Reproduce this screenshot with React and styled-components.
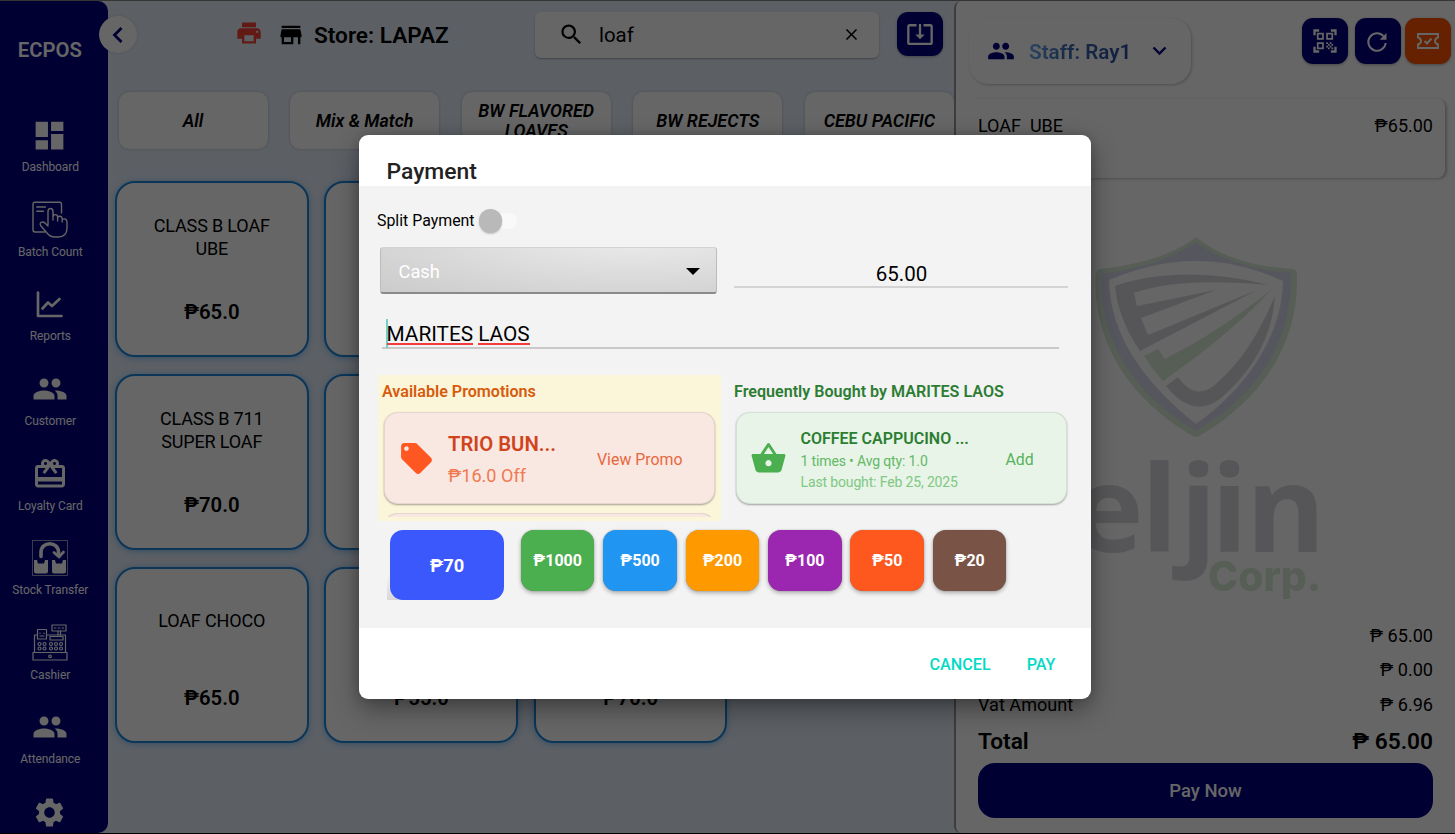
import React from "react";
import styled, { createGlobalStyle, css } from "styled-components";
import {
  MdDashboard, MdPeople, MdRedeem, MdSettings, MdPrint, MdStore, MdSearch,
  MdClose, MdSystemUpdateAlt, MdQrCodeScanner, MdLocalOffer, MdShoppingBasket,
} from "react-icons/md";

const GlobalStyle = createGlobalStyle`
  * { box-sizing: border-box; }
  html, body { margin: 0; padding: 0; overflow: hidden; background: #000; }
  body { font-family: Roboto, "Noto Sans", sans-serif; color: #000; }
  button { font-family: inherit; border: 0; padding: 0; }
  svg { display: block; flex: none; }
`;

const Screen = styled.div`
  position: relative;
  width: 1455px;
  height: 834px;
  padding: 1px 0;
  display: flex;
  overflow: hidden;
  background: linear-gradient(#848484 1px, #e6effc 1px, #e6effc 833px, #000 833px);
`;

/* ---------- sidebar ---------- */
const Sidebar = styled.nav`
  position: relative;
  flex: none;
  width: 107.5px;
  height: 832px;
  padding-right: 8px;
  background: #000080;
  border-radius: 0 10px 10px 0;
  color: #fff;
  display: flex;
  flex-direction: column;
  align-items: center;
`;
const Brand = styled.div`
  height: 30px;
  margin: 34px 0 44px;
  line-height: 30px;
  font-size: 20.3px;
  font-weight: 600;
`;
const NavItem = styled.div`
  flex: none;
  height: 84.65px;
  padding-top: 7px;
  display: flex;
  flex-direction: column;
  align-items: center;
`;
const NavIcon = styled.div`
  height: 38px;
  display: flex;
  align-items: center;
`;
const NavLabel = styled.div`
  margin-top: 5px;
  padding-left: 1px;
  font-size: 12px;
  line-height: 16px;
  letter-spacing: -0.1px;
  white-space: nowrap;
`;
const Collapse = styled.button`
  position: absolute;
  left: 99px;
  top: 15px;
  width: 38px;
  height: 37px;
  border-radius: 50%;
  background: #fff;
  box-shadow: 0 0 3px rgba(0, 0, 0, 0.15);
  display: flex;
  align-items: center;
  justify-content: center;
`;

/* ---------- catalogue ---------- */
const Main = styled.main`
  flex: none;
  width: 846.5px;
  height: 832px;
  overflow: hidden;
`;
const TopBar = styled.header`
  display: flex;
  padding: 11px 0 0 129.5px;
  height: 91px;
`;
const StoreTitle = styled.div`
  display: flex;
  align-items: center;
  width: 298px;
  height: 46px;
  font-size: 22.6px;
  font-weight: 600;
  white-space: nowrap;
`;
const PrinterIcon = styled(MdPrint)`
  margin: 0 14px 4px -2px;
  color: #f44336;
`;
const TitleText = styled.span`
  margin-left: 9px;
`;
const SearchBox = styled.div`
  display: flex;
  align-items: center;
  width: 343.5px;
  height: 46px;
  padding: 0 17.5px 1px 23px;
  border-radius: 6px;
  background: #fff;
  box-shadow: 0 1px 2px rgba(0, 0, 0, 0.3);
  font-size: 20.4px;
`;
const Query = styled.span`
  flex: 1;
  margin-left: 14px;
`;
const ToolButton = styled.button`
  width: 46px;
  height: ${(p) => p.$h || 46}px;
  margin-left: ${(p) => p.$gap || 0}px;
  border-radius: 11px;
  background: ${(p) => p.$bg || "#000080"};
  color: #fff;
  box-shadow: 0 1px 3px rgba(0, 0, 0, 0.3);
  display: flex;
  align-items: center;
  justify-content: center;
`;
const Tabs = styled.div`
  display: flex;
  gap: 22.6px;
  padding-left: 11px;
  height: 88px;
`;
const Tab = styled.div`
  flex: none;
  width: 149px;
  height: 57px;
  padding: ${(p) => (p.$tall ? "9px" : "19px")} 10px 0;
  border-radius: 10px;
  background: #fff;
  box-shadow: 0 0 3px rgba(0, 0, 0, 0.22);
  text-align: center;
  font-size: 17.9px;
  line-height: 20px;
  font-weight: 600;
  font-style: italic;
  overflow: hidden;
`;
const Products = styled.div`
  display: grid;
  grid-template-columns: repeat(3, 193.5px);
  grid-auto-rows: 176px;
  gap: 17px 15.8px;
  padding: 0.5px 0 0 7.5px;
`;
const Product = styled.div`
  border: 2px solid #1f87dc;
  border-radius: 20px;
  background: #fff;
  box-shadow: 0 1px 6px rgba(33, 150, 243, 0.5);
  text-align: center;
`;
const ProductName = styled.div`
  height: 110px;
  padding: ${(p) => (p.$lines > 1 ? 31 : 40)}px 20px 0;
  font-size: 18px;
  letter-spacing: -0.15px;
  line-height: 23px;
  white-space: pre-line;
`;
const ProductPrice = styled.div`
  font-size: 20.3px;
  line-height: 38px;
  font-weight: 600;
`;

/* ---------- order panel ---------- */
const Order = styled.aside`
  position: relative;
  flex: none;
  width: 501px;
  height: 832px;
  padding: 17px 4px 15px 13px;
  display: flex;
  flex-direction: column;
  border-left: 2px solid #9a9a9a;
  border-radius: 7px 0 0 7px;
  background: #fff;
`;
const OrderTop = styled.div`
  display: flex;
  height: 81px;
`;
const StaffCard = styled.div`
  width: 222px;
  height: 66px;
  margin-right: auto;
  padding: 0 24px 0 18px;
  display: flex;
  align-items: center;
  border-radius: 20px;
  background: #fff;
  box-shadow: 1px 1px 3px rgba(0, 0, 0, 0.24);
  color: #000080;
`;
const StaffName = styled.span`
  flex: 1;
  margin-left: 14px;
  padding-top: 2px;
  font-size: 20.7px;
  font-weight: 600;
  color: transparent;
  background: linear-gradient(100deg, #6cb0f5 0, #3c6cb4 40px, #2a4a9c 102px);
  background-clip: text;
  -webkit-background-clip: text;
`;
const OrderLine = styled.div`
  width: 479px;
  height: 79px;
  margin-left: -3px;
  padding: 14.5px 12px 0 12px;
  display: flex;
  justify-content: space-between;
  border-radius: 8px;
  background: #fff;
  box-shadow: 2px 1px 3px rgba(0, 0, 0, 0.26);
  font-size: 18px;
  line-height: 24px;
  white-space: pre;
`;
const Watermark = styled.svg`
  margin: 49px 0 0 96.5px;
`;
const Totals = styled.div`
  margin-top: auto;
  padding: 0 18px 0 9px;
`;
const Row = styled.div`
  display: flex;
  justify-content: space-between;
  height: 34.4px;
  line-height: 34.4px;
  font-size: 18.1px;
  ${(p) => p.$total && css`
    height: 40px;
    line-height: 40px;
    font-size: 22.7px;
    font-weight: 600;
  `}
`;
const PayNow = styled.button`
  width: 455px;
  height: 55px;
  margin-top: 1px;
  border-radius: 17px;
  background: #000080;
  color: #fff;
  font-size: 18.5px;
  font-weight: 500;
`;

/* ---------- dialog ---------- */
const Backdrop = styled.div`
  position: absolute;
  inset: 0;
  padding-right: 5px;
  display: flex;
  align-items: center;
  justify-content: center;
  background: rgba(0, 0, 0, 0.6);
`;
const Dialog = styled.section`
  width: 732px;
  height: 564.5px;
  border-radius: 9px;
  background: #fff;
  box-shadow: 0 10px 26px rgba(0, 0, 0, 0.38), 0 0 10px rgba(0, 0, 0, 0.15);
  overflow: hidden;
`;
const DialogTitle = styled.h2`
  height: 51.5px;
  margin: 0;
  padding: 22px 0 0 27.5px;
  font-size: 22.9px;
  line-height: 30px;
  font-weight: 500;
  color: #222;
`;
const DialogBody = styled.div`
  height: 442px;
  padding-top: 19.5px;
  background: #f3f3f3;
`;
const SplitRow = styled.div`
  display: flex;
  align-items: center;
  height: 30px;
  padding-left: 18px;
  font-size: 15.9px;
`;
const Switch = styled.span`
  display: flex;
  align-items: center;
  width: 26px;
  height: 16px;
  margin-left: 16px;
  border-radius: 8px;
  background: #f9f9f9;
`;
const Thumb = styled.span`
  flex: none;
  width: 23.5px;
  height: 23.5px;
  margin-left: -12px;
  border-radius: 50%;
  background: #b9b9b9;
  box-shadow: 0 1px 2px rgba(0, 0, 0, 0.2);
`;
const TenderRow = styled.div`
  display: flex;
  padding: 11.5px 0 0 21px;
`;
const Spinner = styled.div`
  display: flex;
  align-items: center;
  justify-content: space-between;
  width: 337px;
  height: 47px;
  padding: 2px 16.5px 0 17.5px;
  border-radius: 3px;
  border: 1px solid #bcbcbc;
  border-bottom: 2px solid #8a8a8a;
  border-top-color: #d2d2d2;
  background: radial-gradient(ellipse at 75% -20%, #ebebeb, #d8d8d8 60%, #cbcbcb 100%);
  color: #fff;
  font-size: 18.3px;
`;
const Amount = styled.div`
  width: 334px;
  height: 40.5px;
  margin-left: 17px;
  padding: 15px 0 0 1px;
  border-bottom: 2px solid #d3d3d3;
  text-align: center;
  font-size: 20.5px;
  line-height: 24px;
`;
const CustomerField = styled.div`
  display: flex;
  gap: 5px;
  width: 677px;
  height: 30px;
  margin: 24.5px 0 0 23px;
  padding-left: 4px;
  border-bottom: 2px solid #c9c9c9;
  font-size: 20.8px;
`;
const Caret = styled.span`
  width: 2px;
  height: 29px;
  margin-right: -6.5px;
  background: #74cfc8;
`;
const Misspelt = styled.span`
  height: 26.5px;
  border-bottom: 2px solid #f23c3c;
  line-height: 30.5px;
`;
const Panels = styled.div`
  display: flex;
  padding: 26px 0 0 19px;
`;
const Panel = styled.div`
  width: ${(p) => p.$w}px;
  height: 146.5px;
  margin-right: 9px;
  padding: 0 ${(p) => p.$side}px;
  overflow: hidden;
  background: ${(p) => p.$bg};
`;
const PanelTitle = styled.div`
  height: 37.5px;
  margin-left: -2px;
  font-size: 16.1px;
  line-height: 34px;
  font-weight: 600;
  color: ${(p) => p.$color};
  white-space: nowrap;
`;
const Offer = styled.div`
  display: flex;
  align-items: center;
  height: 92px;
  border-radius: 14px;
  border: 1px solid rgba(120, 130, 120, 0.16);
  background: ${(p) => p.$bg};
  box-shadow: 0 1px 2px rgba(0, 0, 0, 0.34);
  padding-left: ${(p) => p.$pad}px;
  color: ${(p) => p.$color};
`;
const Peek = styled.div`
  height: 4px;
  margin-top: 8.5px;
  overflow: hidden;
`;
const OfferText = styled.div`
  flex: none;
  width: ${(p) => p.$w}px;
  margin-left: ${(p) => p.$ml}px;
  padding-top: 4px;
  white-space: nowrap;
`;
const OfferLine = styled.div`
  font-size: ${(p) => p.$size}px;
  line-height: ${(p) => p.$lh}px;
  font-weight: ${(p) => p.$weight || 400};
  color: ${(p) => p.$color};
  letter-spacing: ${(p) => p.$ls || 0}px;
`;
const OfferAction = styled.span`
  padding-top: 1.5px;
  font-size: 15.9px;
  color: ${(p) => p.$color};
  white-space: nowrap;
`;
const CashRow = styled.div`
  display: flex;
  gap: 8.9px;
  padding: 8.5px 0 0 28px;
`;
const ExactWrap = styled.div`
  height: 70.5px;
  margin-right: 5px;
  padding: 0 3px;
  background: linear-gradient(90deg, transparent 100px, #f3f3f3 100px), linear-gradient(#f3f3f3 45px, #d6d6d6 71px);
`;
const Cash = styled.button`
  width: ${(p) => p.$w || 73.5}px;
  height: ${(p) => p.$h || 61}px;
  padding-top: 1px;
  border-radius: 13px;
  background: ${(p) => p.$bg};
  box-shadow: ${(p) => (p.$w ? "none" : "0 2px 4px rgba(0, 0, 0, 0.3), 0 0 1px rgba(0, 0, 0, 0.4)")};
  color: #fff;
  font-size: ${(p) => p.$size || 16}px;
  font-weight: 700;
`;
const Actions = styled.footer`
  display: flex;
  justify-content: flex-end;
  gap: 36px;
  padding: 26.5px 35.5px 0 0;
`;
const Action = styled.button`
  background: none;
  color: #03dac5;
  font-size: 16.2px;
  line-height: 20px;
  font-weight: 500;
`;

/* ---------- drawings ---------- */
const Stroke = (props) => (
  <svg fill="none" stroke="currentColor" strokeLinecap="round" strokeLinejoin="round" {...props} />
);
const BatchIcon = () => (
  <Stroke width="36" height="37" viewBox="0 0 36 37" strokeWidth="1.4">
    <path d="M29.5 12V3.2Q29.5 1.2 27.5 1.2H3Q1 1.2 1 3.2V28.5Q1 31 3 31H13M4.8 6H13.500M4.800 10.200H11.500" />
    <path d="M16 24V10.500Q16 7.500 18.500 7.500T21 10.500V19M21 16Q21 13.600 23.300 13.600T25.600 16V20M25.600 17Q26 15 28 15.200T30.200 18V21M30.200 19Q31 17.500 33 18T35 21V27Q35 36 26 36H23Q18 36 15 32L8.600 24.500Q7.500 22 9.500 21.200Q12 20.500 14 23L16 25" />
  </Stroke>
);
const ReportsIcon = () => (
  <Stroke width="27" height="27" viewBox="0 0 27 27" strokeWidth="2.7">
    <path d="M2 1.500V25H25.500" />
    <path d="M6.500 17.500L12 11.500L16 15L23.500 8" />
  </Stroke>
);
const TransferIcon = () => (
  <svg width="36" height="36" viewBox="0 0 36 36">
    <rect x=".5" y=".5" width="35" height="35" fill="none" stroke="#b8b8d0" strokeWidth=".8" />
    <path d="M9 16.500V12.500C9 .8 26.500 .8 26.500 12.500V15" fill="none" stroke="#fff" strokeWidth="3.600" strokeLinecap="round" />
    <path d="M22 12.500L27 17L31.500 12" fill="none" stroke="#fff" strokeWidth="2.800" strokeLinejoin="round" strokeLinecap="round" />
    <path d="M2 20H5L6 23.500H12L13 20H16V31.500Q16 33.500 14 33.500H4Q2 33.500 2 31.500ZM20 20H23L24 23.500H30L31 20H34V31.500Q34 33.500 32 33.500H22Q20 33.500 20 31.500Z" fill="#fff" />
  </svg>
);
const CashierIcon = () => (
  <Stroke width="36" height="37" viewBox="0 0 36 37" strokeWidth="1.200">
    <rect x="20" y="1" width="14" height="6" />
    <path d="M22.500 4H24M26.300 4H27.800M30 4H31.500M26 7V11M28.500 7V11" />
    <path d="M5.500 15V5.500H14.500V15ZM8 9V9.500M12 9V9.500M8 12H12" />
    <path d="M5.500 11H2.500V28M14.500 11H33.500V28M18 12.500H31V16H18Z" />
    <path d="M1 28.500H35V36H1Z" />
    {[7.5, 12.5, 19, 24, 29].map((x) => (
      <React.Fragment key={x}>
        <circle cx={x} cy="20" r="1.500" />
        <circle cx={x} cy="24.500" r="1.500" />
      </React.Fragment>
    ))}
    <circle cx="18" cy="32.300" r="1.300" />
  </Stroke>
);
const RefreshIcon = () => (
  <svg width="24" height="24" viewBox="0 0 24 24">
    <path d="M19.700 14A8.700 8.700 0 1 1 17.500 7.200" fill="none" stroke="currentColor" strokeWidth="2" />
    <path d="M20.500 4V10.800H13.700Z" fill="currentColor" />
  </svg>
);
const TicketIcon = () => (
  <Stroke width="24" height="18" viewBox="0 0 24 18" strokeWidth="1.900">
    <path d="M2 2H22V5.500Q19 6.500 19 9T22 12.500V16H2V12.500Q5 11.500 5 9T2 5.500Z" strokeLinejoin="miter" />
    <path d="M8.500 9L11 11.500L15.500 6.500" strokeLinecap="butt" strokeLinejoin="miter" />
  </Stroke>
);
const Logo = () => (
  <Watermark width="290" height="385" viewBox="1066 228 290 385">
    <g opacity="0.2">
      <path d="M1196 238C1218 256 1251 268 1293 270Q1297 271 1297 276C1299 346 1260 401 1201 436Q1196 440 1191 436C1132 401 1093 346 1095.500 277Q1096 271 1100 270C1145 265 1176 254 1196 238Z" fill="#3a9c36" />
      <path d="M1196 243C1218 260 1251 271 1291 274C1293 344 1256 397 1196 432C1136 397 1099 344 1101 275C1145 269 1176 258 1196 243Z" fill="#40409a" />
      <path d="M1196 262C1228 262 1257 270 1283 282C1282 336 1248 388 1196 425C1144 384 1110 336 1109 281C1135 270 1164 262 1196 262Z" fill="#fff" />
      <path d="M1115 287C1165 270 1220 274 1268 286C1222 282 1171 281 1134 294L1137 307L1216 291L1141 319L1148 336L1257 291L1140 352C1126 332 1117 309 1115 287Z" fill="#36405a" />
      <path d="M1144 357L1158 350L1165 360C1204 340 1239 317 1272 290C1238 327 1201 355 1163 382Q1152 370 1144 357Z" fill="#3a9c36" />
      <path d="M1166 387L1178 378C1190 395 1203 397 1217 384C1243 361 1259 334 1275 297C1272 342 1249 375 1221 399C1200 415 1182 407 1166 387Z" fill="#36405a" />
      <g fill="#36405a" fontFamily="'Open Sans', sans-serif" fontWeight="700" fontSize="121">
        <text y="553" x="1072 1141 1180 1211 1246">eljin</text>
      </g>
      <text x="1208" y="592" textLength="113" lengthAdjust="spacingAndGlyphs" fill="#3a9c36" fontFamily="Inter, sans-serif" fontWeight="800" fontSize="41">Corp.</text>
    </g>
  </Watermark>
);

const nav = [
  ["Dashboard", <MdDashboard size={37} />],
  ["Batch Count", <BatchIcon />],
  ["Reports", <ReportsIcon />],
  ["Customer", <MdPeople size={36} />],
  ["Loyalty Card", <MdRedeem size={36} />],
  ["Stock Transfer", <TransferIcon />],
  ["Cashier", <CashierIcon />],
  ["Attendance", <MdPeople size={36} />],
  ["", <MdSettings size={35} />],
];
const tabs = ["All", "Mix & Match", "BW FLAVORED LOAVES", "BW REJECTS", "CEBU PACIFIC"];
const products = [
  ["CLASS B LOAF\nUBE", "₱65.0"], ["", ""], ["", ""],
  ["CLASS B 711\nSUPER LOAF", "₱70.0"], ["", ""], ["", ""],
  ["LOAF CHOCO", "₱65.0"], ["", "₱55.0"], ["", "₱70.0"],
];
const bills = [
  ["₱1000", "#4bae4f"], ["₱500", "#2095f2"], ["₱200", "#fe9900"],
  ["₱100", "#9b26af"], ["₱50", "#fe581f"], ["₱20", "#795446"],
];

export default function App() {
  return (
    <Screen>
      <GlobalStyle />
      <Sidebar>
        <Brand>ECPOS</Brand>
        {nav.map(([label, icon], i) => (
          <NavItem key={i}>
            <NavIcon>{icon}</NavIcon>
            <NavLabel>{label}</NavLabel>
          </NavItem>
        ))}
        <Collapse>
          <Stroke width="12" height="18" viewBox="0 0 12 18" strokeWidth="2.800" color="#000080">
            <path d="M9.500 2L2.500 9L9.500 16" strokeLinecap="butt" strokeLinejoin="miter" />
          </Stroke>
        </Collapse>
      </Sidebar>

      <Main>
        <TopBar>
          <StoreTitle>
            <PrinterIcon size={28} />
            <MdStore size={28} />
            <TitleText>Store: LAPAZ</TitleText>
          </StoreTitle>
          <SearchBox>
            <MdSearch size={27} />
            <Query>loaf</Query>
            <MdClose size={19} />
          </SearchBox>
          <ToolButton $h={43.5} $gap={18}><MdSystemUpdateAlt size={28} /></ToolButton>
        </TopBar>
        <Tabs>
          {tabs.map((t) => <Tab key={t} $tall={t.length > 14}>{t}</Tab>)}
        </Tabs>
        <Products>
          {products.map(([name, price], i) => (
            <Product key={i}>
              <ProductName $lines={name.split("\n").length}>{name}</ProductName>
              <ProductPrice>{price}</ProductPrice>
            </Product>
          ))}
        </Products>
      </Main>

      <Order>
        <OrderTop>
          <StaffCard>
            <MdPeople size={28} />
            <StaffName>Staff: Ray1</StaffName>
            <Stroke width="15" height="10" viewBox="0 0 15 10" strokeWidth="2.400">
              <path d="M1.500 1.500L7.500 7.500L13.500 1.500" strokeLinecap="butt" strokeLinejoin="miter" />
            </Stroke>
          </StaffCard>
          <ToolButton><MdQrCodeScanner size={28} /></ToolButton>
          <ToolButton $gap={7}><RefreshIcon /></ToolButton>
          <ToolButton $gap={4} $bg="#ff5600"><TicketIcon /></ToolButton>
        </OrderTop>
        <OrderLine><span>LOAF  UBE</span><span>₱65.00</span></OrderLine>
        <Logo />
        <Totals>
          <Row><span /><span>₱ 65.00</span></Row>
          <Row><span /><span>₱ 0.00</span></Row>
          <Row><span>Vat Amount</span><span>₱ 6.96</span></Row>
          <Row $total><span>Total</span><span>₱ 65.00</span></Row>
          <PayNow>Pay Now</PayNow>
        </Totals>
      </Order>

      <Backdrop>
        <Dialog>
          <DialogTitle>Payment</DialogTitle>
          <DialogBody>
            <SplitRow>Split Payment<Switch><Thumb /></Switch></SplitRow>
            <TenderRow>
              <Spinner>
                Cash
                <svg width="14" height="7" viewBox="0 0 14 7"><path d="M0 0H14L7 7Z" fill="#000" /></svg>
              </Spinner>
              <Amount>65.00</Amount>
            </TenderRow>
            <CustomerField>
              <Caret /><Misspelt>MARITES</Misspelt><Misspelt>LAOS</Misspelt>
            </CustomerField>
            <Panels>
              <Panel $w={343} $side={6} $bg="#fbf5da">
                <PanelTitle $color="#d65c0c">Available Promotions</PanelTitle>
                <Offer $bg="#f9e7e2" $pad={12.5} $color="#fe5722">
                  <MdLocalOffer size={37} />
                  <OfferText $w={149} $ml={13.5}>
                    <OfferLine $size={20.3} $lh={31} $weight={600} $color="#d0441c">TRIO BUN...</OfferLine>
                    <OfferLine $size={18.1} $lh={31} $color="#f07a50">₱16.0 Off</OfferLine>
                  </OfferText>
                  <OfferAction $color="#e8673d">View Promo</OfferAction>
                </Offer>
                <Peek><Offer $bg="#f9e7e2" /></Peek>
              </Panel>
              <Panel $w={343} $side={6} $bg="transparent">
                <PanelTitle $color="#2c7d32">Frequently Bought by MARITES LAOS</PanelTitle>
                <Offer $bg="#e7f4e7" $pad={13} $color="#4bae4f">
                  <MdShoppingBasket size={37} />
                  <OfferText $w={205} $ml={13.5}>
                    <OfferLine $size={16} $lh={23} $weight={600} $color="#2c7d32">COFFEE CAPPUCINO ...</OfferLine>
                    <OfferLine $size={14} $lh={22} $ls={-0.14} $color="#63b966">1 times • Avg qty: 1.0</OfferLine>
                    <OfferLine $size={14} $lh={21} $ls={-0.14} $color="#81c784">Last bought: Feb 25, 2025</OfferLine>
                  </OfferText>
                  <OfferAction $color="#57b25a">Add</OfferAction>
                </Offer>
              </Panel>
            </Panels>
            <CashRow>
              <ExactWrap><Cash $w={114} $h={70.5} $size={18.3} $bg="#3b58fd">₱70</Cash></ExactWrap>
              {bills.map(([label, bg]) => <Cash key={label} $bg={bg}>{label}</Cash>)}
            </CashRow>
          </DialogBody>
          <Actions>
            <Action>CANCEL</Action>
            <Action>PAY</Action>
          </Actions>
        </Dialog>
      </Backdrop>
    </Screen>
  );
}
